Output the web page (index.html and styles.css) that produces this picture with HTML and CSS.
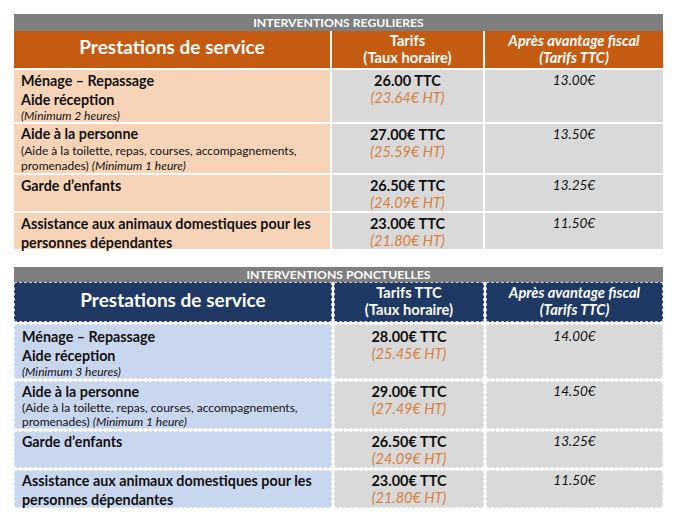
FILE: index.html
```html
<!DOCTYPE html>
<html lang="fr">
<head>
<meta charset="utf-8">
<link rel="stylesheet" href="styles.css">
</head>
<body>
<div class="page">
  <section class="tarifs t-reg">
    <div class="band">INTERVENTIONS REGULIERES</div>
    <div class="grid">
      <div class="cell head h-main">Prestations de service</div>
      <div class="cell head">Tarifs<br>(Taux horaire)</div>
      <div class="cell head it">Après avantage fiscal<br>(Tarifs TTC)</div>

      <div class="cell svc"><b>Ménage – Repassage</b><b>Aide réception</b><i class="note">(Minimum 2 heures)</i></div>
      <div class="cell price"><b>26.00 TTC</b><i class="ht">(23.64€ HT)</i></div>
      <div class="cell net">13.00€</div>

      <div class="cell svc multi"><b>Aide à la personne</b><span class="note">(Aide à la toilette, repas, courses, accompagnements,</span><span class="note">promenades) <i>(Minimum 1 heure)</i></span></div>
      <div class="cell price"><b>27.00€ TTC</b><i class="ht">(25.59€ HT)</i></div>
      <div class="cell net">13.50€</div>

      <div class="cell svc"><b>Garde d’enfants</b></div>
      <div class="cell price"><b>26.50€ TTC</b><i class="ht">(24.09€ HT)</i></div>
      <div class="cell net">13.25€</div>

      <div class="cell svc"><b class="tight">Assistance aux animaux domestiques pour les personnes dépendantes</b></div>
      <div class="cell price"><b>23.00€ TTC</b><i class="ht">(21.80€ HT)</i></div>
      <div class="cell net">11.50€</div>
    </div>
  </section>

  <section class="tarifs t-pon">
    <div class="band">INTERVENTIONS PONCTUELLES</div>
    <div class="grid">
      <div class="cell head h-main">Prestations de service</div>
      <div class="cell head">Tarifs TTC<br>(Taux horaire)</div>
      <div class="cell head it">Après avantage fiscal<br>(Tarifs TTC)</div>

      <div class="cell svc first"><b>Ménage – Repassage</b><b>Aide réception</b><i class="note">(Minimum 3 heures)</i></div>
      <div class="cell price first"><b>28.00€ TTC</b><i class="ht">(25.45€ HT)</i></div>
      <div class="cell net first">14.00€</div>

      <div class="cell svc multi"><b>Aide à la personne</b><span class="note">(Aide à la toilette, repas, courses, accompagnements,</span><span class="note">promenades) <i>(Minimum 1 heure)</i></span></div>
      <div class="cell price"><b>29.00€ TTC</b><i class="ht">(27.49€ HT)</i></div>
      <div class="cell net">14.50€</div>

      <div class="cell svc"><b>Garde d’enfants</b></div>
      <div class="cell price"><b>26.50€ TTC</b><i class="ht">(24.09€ HT)</i></div>
      <div class="cell net">13.25€</div>

      <div class="cell svc"><b class="tight">Assistance aux animaux domestiques pour les personnes dépendantes</b></div>
      <div class="cell price"><b>23.00€ TTC</b><i class="ht">(21.80€ HT)</i></div>
      <div class="cell net">11.50€</div>
    </div>
  </section>
</div>
</body>
</html>
```

FILE: styles.css
```css
html, body {
  margin: 0;
  padding: 0;
  background: #ffffff;
}

.page {
  width: 677px;
  height: 520px;
  padding: 14px 0 0 14px;
  box-sizing: border-box;
  font-family: Lato, "Open Sans", sans-serif;
  color: #111111;
  display: flex;
  flex-direction: column;
  gap: 18px;
}

.tarifs {
  width: 649px;
  display: flex;
  flex-direction: column;
}

.band {
  background: #7f7f7f;
  color: #ffffff;
  font-weight: 700;
  font-size: 12.2px;
  text-align: center;
}

.t-reg .band { height: 17px; line-height: 18px; }
.t-pon .band { height: 15px; line-height: 15px; }

.grid {
  display: grid;
  gap: 2px;
  background: #ffffff;
}

.t-reg .grid {
  grid-template-columns: 316px 151px 178px;
  grid-template-rows: 37px 52px 49px 36px 36px;
}

.t-pon .grid {
  grid-template-columns: 318px 150px 177px;
  grid-template-rows: 40px 55px 48px 37px 38px;
}

.cell {
  box-sizing: border-box;
  padding-top: 1px;
}

.t-pon .cell {
  border: 1px dashed rgba(255, 255, 255, 0.75);
  padding-top: 0;
}

.head {
  color: #ffffff;
  font-weight: 700;
  font-size: 14.7px;
  line-height: 17px;
  text-align: center;
  display: flex;
  align-items: center;
  justify-content: center;
  padding: 0 0 1px 0;
}

.head.it { font-style: italic; }

.head.h-main {
  font-size: 19px;
  line-height: 24px;
  padding-bottom: 6px;
}

.t-reg .head { background: #c55a11; }
.t-reg .svc { background: #f7d4b8; }

.t-pon .head { background: #203864; padding-bottom: 3px; }
.t-pon .head.h-main { padding-bottom: 5px; }
.t-pon .svc { background: #c9d7ee; }

.price, .net {
  background: #d9d9d9;
  text-align: center;
}

.svc {
  padding-left: 7px;
  padding-right: 6px;
}

.svc b {
  display: block;
  font-size: 14.3px;
  line-height: 19px;
}

.svc .note {
  display: block;
  font-size: 12px;
  line-height: 14px;
  white-space: nowrap;
}

.t-reg .svc.multi { padding-top: 0; }
.t-reg .svc.multi b { line-height: 20px; }
.t-reg .svc.multi .note { line-height: 14.5px; }

.price b {
  display: block;
  font-size: 14.5px;
  line-height: 19px;
}

.price .ht {
  display: block;
  color: #d5813f;
  font-size: 14.5px;
  line-height: 16px;
}

.net {
  font-style: italic;
  font-size: 13.5px;
  line-height: 19px;
}

.t-pon .first { padding-top: 2px; }
```
